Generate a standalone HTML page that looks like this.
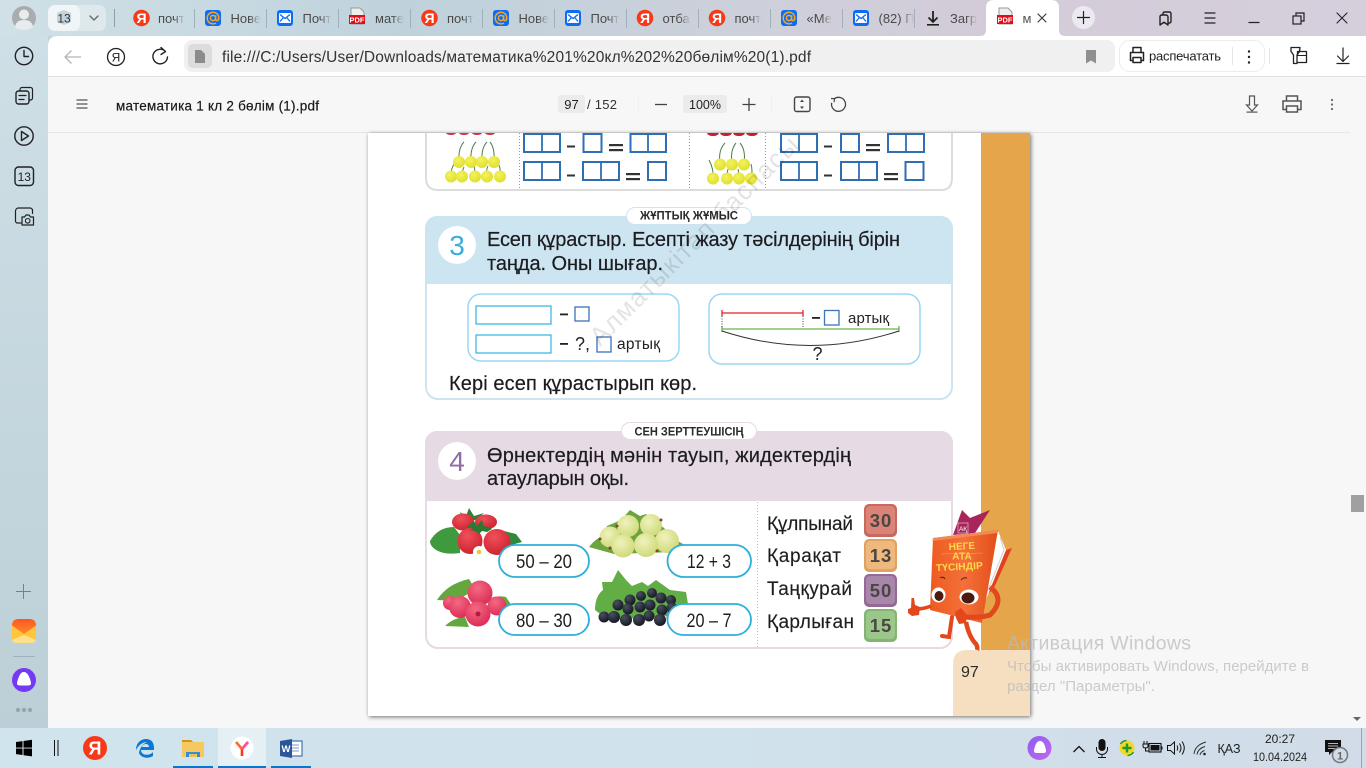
<!DOCTYPE html>
<html lang="ru">
<head>
<meta charset="utf-8">
<title>математика 1 кл 2 бөлім (1).pdf</title>
<style>
html,body{margin:0;padding:0;width:1366px;height:768px;overflow:hidden;background:#f7f7f7}
svg{display:block;position:absolute;left:0;top:0}
text{font-family:"Liberation Sans","DejaVu Sans",sans-serif}
.ic{fill:none;stroke:#222;stroke-width:1.4;stroke-linecap:round;stroke-linejoin:round}
.sq{fill:#fff;stroke:#2f6db5;stroke-width:2}
.tb{fill:#1c1c20;font-size:20px;stroke:#1c1c20;stroke-width:.2}
.w{fill:#1e1e22;font-size:19px;stroke:#1e1e22;stroke-width:.15}
.p{fill:#fff;stroke:#2eaedb;stroke-width:1.8}
.pt{fill:#1e1e22;font-size:19px;text-anchor:middle}
.tile{font-size:18.5px;font-weight:bold;fill:#4a4644;text-anchor:middle;letter-spacing:1px}
.tab{font-size:13px;fill:url(#fade)}
.act{fill:#bbb;fill-opacity:.75}
</style>
</head>
<body>
<svg width="1366" height="768" viewBox="0 0 1366 768" xmlns="http://www.w3.org/2000/svg">
<defs>
<linearGradient id="top" x1="0" x2="1" y1="0" y2="0">
<stop offset="0" stop-color="#d0e0e6"/><stop offset=".3" stop-color="#bfd2dc"/><stop offset=".55" stop-color="#cdd0da"/><stop offset=".75" stop-color="#d4cbd8"/><stop offset="1" stop-color="#d5cfdc"/>
</linearGradient>
<linearGradient id="side" x1="0" x2="0" y1="0" y2="1">
<stop offset="0" stop-color="#cfdfe6"/><stop offset="1" stop-color="#bccfd7"/>
</linearGradient>
<linearGradient id="task" x1="0" x2="1" y1="0" y2="0">
<stop offset="0" stop-color="#cfe4ed"/><stop offset=".5" stop-color="#d0e2ec"/><stop offset="1" stop-color="#d1dce8"/>
</linearGradient>
<linearGradient id="fade" x1="0" x2="1" y1="0" y2="0">
<stop offset="0" stop-color="#4a4a4a"/><stop offset=".6" stop-color="#4a4a4a"/><stop offset="1" stop-color="#4a4a4a" stop-opacity="0"/>
</linearGradient>
<linearGradient id="mail" x1="0" x2="0" y1="0" y2="1">
<stop offset="0" stop-color="#ff5522"/><stop offset="1" stop-color="#ff8a2a"/>
</linearGradient>
<linearGradient id="alice2" x1="0" x2="1" y1="0" y2="1">
<stop offset="0" stop-color="#8d5cf0"/><stop offset="1" stop-color="#c368ee"/>
</linearGradient>
<linearGradient id="cover" x1="0" x2="1" y1="0" y2="0">
<stop offset="0" stop-color="#ee5a20"/><stop offset=".5" stop-color="#f4703a"/><stop offset="1" stop-color="#e34e18"/>
</linearGradient>
<radialGradient id="red" cx=".4" cy=".3" r=".8"><stop offset="0" stop-color="#f0505a"/><stop offset="1" stop-color="#c81e2a"/></radialGradient>
<radialGradient id="rasp" cx=".4" cy=".3" r=".8"><stop offset="0" stop-color="#f36a84"/><stop offset="1" stop-color="#d92550"/></radialGradient>
<radialGradient id="goose" cx=".4" cy=".35" r=".8"><stop offset="0" stop-color="#f0f2bd"/><stop offset="1" stop-color="#c8d56c"/></radialGradient>
<radialGradient id="cur" cx=".35" cy=".3" r=".8"><stop offset="0" stop-color="#4a5060"/><stop offset="1" stop-color="#10121c"/></radialGradient>
<radialGradient id="yel" cx=".4" cy=".35" r=".8"><stop offset="0" stop-color="#f4f25e"/><stop offset="1" stop-color="#dbdc22"/></radialGradient>
<filter id="shadow" x="-5%" y="-5%" width="110%" height="110%"><feDropShadow dx="1" dy="1" stdDeviation="2" flood-color="#000" flood-opacity=".55"/></filter>
<g id="atI"><rect x="-8" y="-8" width="16" height="16" rx="3" fill="#0b6cf5"/><circle r="2.6" fill="none" stroke="#f9a825" stroke-width="1.5"/><path d="M2.6-2.6V1q0 1.8 1.6 1.5T5.8 0A5.8 5.8 0 1 0 3 5" fill="none" stroke="#f9a825" stroke-width="1.5"/></g>
<g id="mlI"><rect x="-8" y="-8" width="16" height="16" rx="3" fill="#0b6cf5"/><rect x="-6" y="-5" width="12" height="10" rx="1" fill="#fff"/><path d="M-5-3.5 0 .5 5-3.5M-5 3.5-1.8-.4M5 3.5 1.8-.4" fill="none" stroke="#0b6cf5" stroke-width="1.3"/></g>
</defs>

<!-- browser frame -->
<rect width="1366" height="36" fill="url(#top)"/>
<rect y="36" width="48" height="692" fill="url(#side)"/>
<rect x="48" y="36" width="1318" height="40" fill="#fff"/>
<path d="M48 36h10q-10 0-10 10z" fill="#c3d4dc"/>
<rect x="48" y="76" width="1318" height="1" fill="#dfdfdf"/>
<rect x="48" y="77" width="1318" height="651" fill="#f7f7f7"/>
<rect x="48" y="132" width="1302" height="1" fill="#e6e6e6"/>

<!-- avatar & tab group -->
<circle cx="24" cy="18" r="12" fill="#a9adaf"/>
<circle cx="24" cy="14.5" r="5" fill="#e9ecee"/>
<path d="M15 27q1-7 9-7t9 7q-4 3-9 3t-9-3z" fill="#e9ecee"/>
<rect x="48" y="5" width="58" height="26" rx="7" fill="#fff" fill-opacity=".35"/>
<rect x="48" y="5" width="32" height="26" rx="7" fill="#fff" fill-opacity=".55"/>
<path d="M64 10l7 3v9l-7 3-7-3v-9z" fill="#c5d3da"/>
<text x="64" y="22.5" font-size="12" text-anchor="middle" fill="#333">13</text>
<path d="M90 16l4 4 4-4" class="ic" style="stroke:#6a6a6a"/>
<rect x="114" y="9" width="1" height="18" fill="#8e9da6"/>

<!-- tabs -->
<g fill="#9fb0ba">
<rect x="194" y="9" width="1" height="19"/><rect x="266" y="9" width="1" height="19"/><rect x="338" y="9" width="1" height="19"/><rect x="410" y="9" width="1" height="19"/><rect x="482" y="9" width="1" height="19"/><rect x="554" y="9" width="1" height="19"/><rect x="626" y="9" width="1" height="19"/><rect x="698" y="9" width="1" height="19"/><rect x="770" y="9" width="1" height="19"/><rect x="842" y="9" width="1" height="19"/><rect x="914" y="9" width="1" height="19"/>
</g>
<circle cx="141.500" cy="18" r="8.300" fill="#f7391a"/><text x="141.500" y="23" font-size="14" font-weight="bold" fill="#fff" text-anchor="middle">Я</text>
<use href="#atI" x="213" y="18"/>
<use href="#mlI" x="285" y="18"/>
<g>
<path d="M351 8h9l4 4v12h-13z" fill="#eee" stroke="#999" stroke-width="1"/><rect x="349" y="15" width="16" height="9" fill="#e30b17"/><text x="357" y="22.500" font-size="7.500" font-weight="bold" fill="#fff" text-anchor="middle">PDF</text>
</g>
<circle cx="429.500" cy="18" r="8.300" fill="#f7391a"/><text x="429.500" y="23" font-size="14" font-weight="bold" fill="#fff" text-anchor="middle">Я</text>
<use href="#atI" x="501" y="18"/>
<use href="#mlI" x="573" y="18"/>
<circle cx="645" cy="18" r="8.300" fill="#f7391a"/><text x="645" y="23" font-size="14" font-weight="bold" fill="#fff" text-anchor="middle">Я</text>
<circle cx="717" cy="18" r="8.300" fill="#f7391a"/><text x="717" y="23" font-size="14" font-weight="bold" fill="#fff" text-anchor="middle">Я</text>
<use href="#atI" x="789" y="18"/>
<use href="#mlI" x="861" y="18"/>
<path d="M933 11v11M928.500 17.500l4.500 4.500 4.500-4.500" fill="none" stroke="#222" stroke-width="1.800"/><rect x="927" y="24" width="12" height="1.600" fill="#222"/>
<text class="tab" x="158" y="23">почт</text>
<text class="tab" x="230.500" y="23">Нове</text>
<text class="tab" x="302.500" y="23">Почт</text>
<text class="tab" x="375" y="23">мате</text>
<text class="tab" x="447" y="23">почт</text>
<text class="tab" x="518.500" y="23">Нове</text>
<text class="tab" x="590.500" y="23">Почт</text>
<text class="tab" x="662.500" y="23">отба</text>
<text class="tab" x="734.500" y="23">почт</text>
<text class="tab" x="806.500" y="23">«Ме</text>
<text class="tab" x="878.500" y="23">(82) П</text>
<text class="tab" x="950" y="23">Загр</text>

<!-- active tab -->
<path d="M980 36q6 0 6-6V8q0-8 8-8h57q8 0 8 8v22q0 6 6 6z" fill="#fff"/>
<path d="M999 8h9l4 4v12h-13z" fill="#eee" stroke="#999" stroke-width="1"/><rect x="997" y="15" width="16" height="9" fill="#e30b17"/><text x="1005" y="22.500" font-size="7.500" font-weight="bold" fill="#fff" text-anchor="middle">PDF</text>
<text x="1022.500" y="23" font-size="13" fill="#555">м</text>
<path d="M1038 14l8 8M1046 14l-8 8" class="ic" style="stroke:#333;stroke-width:1.100"/>

<!-- new tab & window controls -->
<circle cx="1083.500" cy="17.500" r="11.500" fill="#eceaf0"/>
<path d="M1083.500 11.500v12M1077.500 17.500h12" class="ic" style="stroke-width:1.200"/>
<path d="M1163 15h-1.500a1.500 1.500 0 0 0-1.500 1.500V25l4-2.800 4 2.800v-2h1.500a1.500 1.500 0 0 0 1.500-1.500V13.500a1.500 1.500 0 0 0-1.500-1.500h-5a1.500 1.500 0 0 0-1.500 1.500V15h3a2 2 0 0 1 2 2v6" class="ic"/>
<path d="M1205 13h10M1205 18h10M1205 23h10" class="ic" style="stroke-width:1.200"/>
<path d="M1249 22.500h10" class="ic" style="stroke-width:1.200"/>
<rect x="1293" y="16" width="8" height="8" fill="none" stroke="#222" stroke-width="1.200"/><path d="M1296 16v-3h8v8h-3" fill="none" stroke="#222" stroke-width="1.200"/>
<path d="M1337 13l10 10M1347 13l-10 10" class="ic" style="stroke-width:1.100"/>

<!-- toolbar -->
<path d="M81 57H65M71.500 50.500 65 57l6.500 6.500" fill="none" stroke="#b5b5b5" stroke-width="1.300"/>
<circle cx="116" cy="57" r="8.500" fill="none" stroke="#222" stroke-width="1.300"/><text x="116" y="61.500" font-size="12" text-anchor="middle" fill="#222">Я</text>
<path d="M165.500 51.500A7.300 7.300 0 1 0 167.500 57M161 47.500l4.500 4-4.500 3" class="ic" style="stroke-width:1.400"/>
<rect x="184" y="40" width="931" height="32" rx="8" fill="#f0f0f0"/>
<rect x="188" y="44" width="24" height="24" rx="5" fill="#dcdcdc"/>
<path d="M195 50h6l4 4v9h-10z" fill="#8b8b8b"/>
<text x="222" y="62" font-size="15.500" fill="#333" textLength="589">file:///C:/Users/User/Downloads/математика%201%20кл%202%20бөлім%20(1).pdf</text>
<path d="M1086 50h10v13.500l-5-3-5 3z" fill="#8f8f8f"/>
<rect x="1119.500" y="40.500" width="145" height="31" rx="10" fill="#fff" stroke="#ececec"/>
<path d="M1133 52v-4.500h8V52M1133 60.500h-2.500V52.500h13v8H1141M1133 57.500h8v5h-8z" class="ic" style="stroke-width:1.500"/>
<text x="1149" y="60.500" font-size="13" fill="#222" textLength="72">распечатать</text>
<rect x="1232" y="47" width="1" height="18" fill="#e6e6e6"/>
<circle cx="1249" cy="51.500" r="1.200" fill="#222"/><circle cx="1249" cy="57" r="1.200" fill="#222"/><circle cx="1249" cy="62.500" r="1.200" fill="#222"/>
<rect x="1269" y="48" width="1" height="16" fill="#e6e6e6"/>
<path d="M1291 47.500h9l-.5 4-2.500 3.500v8.500h-3.500V55l-2.500-3.500z" class="ic" style="stroke-width:1.300"/>
<path d="M1297.500 55v-3.500h9v11h-9" class="ic" style="stroke-width:1.300"/><path d="M1297.500 55.500h9" class="ic" style="stroke-width:1.100"/>
<path d="M1343 48v13M1337.500 56l5.500 5.500 5.500-5.500" class="ic" style="stroke-width:1.200"/><path d="M1337 63.500h12" class="ic" style="stroke-width:1.200"/>

<!-- pdf toolbar -->
<path d="M76.500 100h11M76.500 104h11M76.500 108h11" fill="none" stroke="#555" stroke-width="1.300"/>
<text x="116" y="110.500" font-size="13.500" fill="#1a1a1a" stroke="#1a1a1a" stroke-width=".2" textLength="203">математика 1 кл 2 бөлім (1).pdf</text>
<rect x="558" y="95" width="27" height="18" rx="3" fill="#ebebeb"/>
<text x="571.500" y="109" font-size="13" fill="#222" text-anchor="middle">97</text>
<text x="587" y="109" font-size="13" fill="#333" textLength="30">/ 152</text>
<rect x="638" y="96" width="1" height="17" fill="#f0f0f0"/>
<path d="M655 104.500h12" stroke="#444" stroke-width="1.300"/>
<rect x="683" y="95" width="44" height="18" rx="3" fill="#ebebeb"/>
<text x="705" y="109" font-size="12.500" fill="#222" text-anchor="middle">100%</text>
<path d="M749 98v13M742.500 104.500h13" stroke="#444" stroke-width="1.300"/>
<rect x="771" y="96" width="1" height="17" fill="#f0f0f0"/>
<rect x="794.500" y="97" width="15.500" height="14.500" rx="2" fill="none" stroke="#444" stroke-width="1.400"/>
<path d="M802 99.500l2 2.500h-4zM802 109l2-2.500h-4z" fill="#444"/>
<path d="M834 99a7 7 0 1 1-2.300 3.800" fill="none" stroke="#444" stroke-width="1.300"/><path d="M831 98.500l3.500.2-.4 3.500" fill="none" stroke="#444" stroke-width="1.200"/>
<path d="M1249.500 96h5v9h3l-5.500 6-5.500-6h3z" fill="none" stroke="#555" stroke-width="1.200"/><rect x="1246.500" y="111.500" width="11" height="1.200" fill="#555"/>
<path d="M1286.500 101v-5h11v5M1286.500 109.500h-3.500V101h18v8.500h-3.500M1286.500 106h11v6h-11z" fill="none" stroke="#555" stroke-width="1.500"/>
<circle cx="1332" cy="100" r="1.100" fill="#666"/><circle cx="1332" cy="104.500" r="1.100" fill="#666"/><circle cx="1332" cy="109" r="1.100" fill="#666"/>

<!-- sidebar icons -->
<circle cx="24" cy="56" r="8.700" class="ic"/><path d="M24 50.500V56.500h4.500" class="ic"/>
<rect x="16" y="91" width="13" height="13" rx="2.500" class="ic"/><path d="M19 95.500h7M19 99.500h5M20 91v-1.500a2 2 0 0 1 2-2h8.500a2 2 0 0 1 2 2V98a2 2 0 0 1-2 2H29" class="ic" style="stroke-width:1.200"/>
<circle cx="24" cy="136" r="9.200" class="ic"/><path d="M21.500 131.500v9l7-4.500z" class="ic"/>
<rect x="15" y="167" width="18.500" height="18.500" rx="3.500" class="ic"/><text x="24.300" y="181" font-size="12" text-anchor="middle" fill="#222">13</text>
<path d="M21 223h-3.500a2 2 0 0 1-2-2v-10a3 3 0 0 1 3-3H30a2.500 2.500 0 0 1 2.500 2.500v3" class="ic" style="stroke-width:1.200"/>
<path d="M22 225h11.500v-8H30.500l-1.500-2h-3l-1.500 2H22z" class="ic" style="stroke-width:1.200"/><circle cx="27.700" cy="220.800" r="2.300" class="ic" style="stroke-width:1.100"/>
<path d="M23.500 584v15M16 591.500h15" stroke="#74828a" stroke-width="1"/>
<rect x="12" y="619" width="24" height="24" rx="6" fill="#ffc53d"/>
<path d="M12 625a6 6 0 0 1 6-6h12a6 6 0 0 1 6 6v.5L24 634 12 625.500z" fill="url(#mail)"/>
<path d="M12 640l12-5 12 5a5 5 0 0 1-5 3H17a5 5 0 0 1-5-3zM12 636v4M36 636v4" fill="#ffe08a"/>
<rect x="13" y="656" width="22" height="1" fill="#9fb1ba"/>
<circle cx="24" cy="680" r="12" fill="#7339f3"/><path d="M24 672q3 0 5 4.500t2 7q0 2-3 2h-8q-3 0-3-2t2-7 5-4.500z" fill="#fff"/>
<circle cx="18" cy="710" r="2.200" fill="#96a5ac"/><circle cx="24" cy="710" r="2.200" fill="#96a5ac"/><circle cx="30" cy="710" r="2.200" fill="#96a5ac"/>

<!-- scrollbar -->
<rect x="1351" y="495" width="13" height="17" fill="#a0a0a0"/>
<path d="M1353 717h8l-4 4z" fill="#666"/>

<!-- PAGE -->
<rect x="368" y="133" width="662" height="583" fill="#fff" filter="url(#shadow)"/>
<rect x="981" y="133" width="49" height="517" fill="#e5a54a"/>
<path d="M953 716v-52q0-14 14-14h63v66z" fill="#f6dfc0"/>
<text x="961" y="677" font-size="16" fill="#2b2b2b">97</text>

<!-- top card -->
<path d="M426 133v45q0 12 12 12h503q11 0 11-12v-45" fill="#fff" stroke="#dcdcdc" stroke-width="2"/>
<path d="M519.500 133v57M689.500 133v57M765.500 133v57" stroke="#999" stroke-width="1" stroke-dasharray="1 2"/>
<!-- cherries left -->
<g fill="#d8313a">
<path d="M446 133h10q-1 2-5 2t-5-2zM459 133h10q-1 2-5 2t-5-2zM472 133h10q-1 2-5 2t-5-2zM485 133h10q-1 2-5 2t-5-2z"/>
</g>
<g fill="none" stroke="#4d7c52" stroke-width="1">
<path d="M459 162q-1-14 5-20M471 162q-1-14 5-20M482 162q-1-14 5-20M494 162q1-14-4-20M451 177q-1-8 5-16M462 177q0-6 2-10M475 177q0-8-1-11M487 177q-1-8 1-11M500 177q1-7-1-12"/>
</g>
<g fill="url(#yel)">
<circle cx="459" cy="162" r="6"/><circle cx="471" cy="162" r="6"/><circle cx="482" cy="162" r="6"/><circle cx="494" cy="162" r="6"/>
<circle cx="451" cy="176.500" r="6"/><circle cx="462" cy="176.500" r="6"/><circle cx="475" cy="176.500" r="6"/><circle cx="487" cy="176.500" r="6"/><circle cx="500" cy="176.500" r="6"/>
</g>
<!-- cherries right -->
<g fill="#c71d2c">
<path d="M707 133h12q-1 3-6 3t-6-3zM720 133h12q-1 3-6 3t-6-3zM733 133h12q-1 3-6 3t-6-3zM746 133h12q-1 3-6 3t-6-3z"/>
</g>
<g fill="none" stroke="#4d7c52" stroke-width="1">
<path d="M720 164q-2-14 5-21M732 164q-2-14 4-21M744 164q2-14-4-21M713 179q1-10-4-19M727 179q0-6 1-10M739 179q0-6-1-10M751 179q2-8 0-15"/>
</g>
<g fill="url(#yel)">
<circle cx="720" cy="164.500" r="6"/><circle cx="732" cy="164.500" r="6"/><circle cx="744" cy="164.500" r="6"/>
<circle cx="713" cy="178.500" r="6"/><circle cx="727" cy="178.500" r="6"/><circle cx="739" cy="178.500" r="6"/><circle cx="751" cy="178.500" r="6"/>
</g>
<!-- squares -->
<g>
<rect class="sq" x="524" y="134" width="36" height="18"/><path d="M542 134v18" stroke="#2f6db5" stroke-width="1.800"/>
<rect class="sq" x="583.500" y="134" width="18" height="18"/>
<rect class="sq" x="630.500" y="134" width="35.500" height="18"/><path d="M648 134v18" stroke="#2f6db5" stroke-width="1.800"/>
<rect class="sq" x="524" y="162" width="36" height="18"/><path d="M542 162v18" stroke="#2f6db5" stroke-width="1.800"/>
<rect class="sq" x="583" y="162" width="36" height="18"/><path d="M601 162v18" stroke="#2f6db5" stroke-width="1.800"/>
<rect class="sq" x="648" y="162" width="18" height="18"/>
<rect class="sq" x="781" y="134" width="36" height="18"/><path d="M799 134v18" stroke="#2f6db5" stroke-width="1.800"/>
<rect class="sq" x="841" y="134" width="18" height="18"/>
<rect class="sq" x="888" y="134" width="36" height="18"/><path d="M906 134v18" stroke="#2f6db5" stroke-width="1.800"/>
<rect class="sq" x="781" y="162" width="36" height="18"/><path d="M799 162v18" stroke="#2f6db5" stroke-width="1.800"/>
<rect class="sq" x="841" y="162" width="36" height="18"/><path d="M859 162v18" stroke="#2f6db5" stroke-width="1.800"/>
<rect class="sq" x="905.500" y="162" width="18" height="18"/>
</g>
<g fill="#333">
<rect x="567" y="145.500" width="8" height="2"/><rect x="567" y="174.500" width="8" height="2"/>
<rect x="824" y="145.500" width="8" height="2"/><rect x="824" y="174.500" width="8" height="2"/>
<rect x="609" y="144" width="14" height="2.200"/><rect x="609" y="149" width="14" height="2.200"/>
<rect x="626" y="173" width="14" height="2.200"/><rect x="626" y="178" width="14" height="2.200"/>
<rect x="866" y="144" width="14" height="2.200"/><rect x="866" y="149" width="14" height="2.200"/>
<rect x="884" y="173" width="14" height="2.200"/><rect x="884" y="178" width="14" height="2.200"/>
</g>

<!-- section 3 -->
<rect x="426" y="217" width="526" height="182" rx="12" fill="#fff" stroke="#cde5f1" stroke-width="2"/>
<path d="M425 284v-56a12 12 0 0 1 12-12h504a12 12 0 0 1 12 12v56z" fill="#cde5f1"/>
<rect x="626.500" y="207.500" width="125" height="17" rx="8.500" fill="#fff" stroke="#cde5f1"/>
<text x="689" y="219.500" font-size="11.500" font-weight="bold" fill="#2a2a2a" text-anchor="middle" textLength="98" lengthAdjust="spacingAndGlyphs">ЖҰПТЫҚ ЖҰМЫС</text>
<circle cx="457" cy="245" r="19" fill="#fff"/>
<text x="457" y="255" font-size="28" fill="#3aaedb" text-anchor="middle">3</text>
<text class="tb" x="487" y="246" textLength="413">Есеп құрастыр. Есепті жазу тәсілдерінің бірін</text>
<text class="tb" x="487" y="270" textLength="176">таңда. Оны шығар.</text>

<rect x="468" y="294" width="211" height="67" rx="13" fill="#fff" stroke="#9bd7f3" stroke-width="1.500"/>
<rect x="476" y="306" width="75" height="18" fill="#fff" stroke="#2db4e2" stroke-width="1.200"/>
<rect x="476" y="335" width="75" height="18" fill="#fff" stroke="#2db4e2" stroke-width="1.200"/>
<rect x="560" y="313.500" width="8" height="1.800" fill="#222"/>
<rect x="575" y="307" width="14" height="14" fill="#fff" stroke="#3b74b8" stroke-width="1.300"/>
<rect x="560" y="343" width="8" height="1.800" fill="#222"/>
<text x="575" y="350" font-size="18" fill="#222">?,</text>
<rect x="597" y="337" width="14" height="15" fill="#fff" stroke="#3b74b8" stroke-width="1.300"/>
<text x="617" y="349" font-size="15.500" fill="#222" textLength="43">артық</text>

<rect x="709" y="294" width="211" height="70" rx="13" fill="#fff" stroke="#9bd7f3" stroke-width="1.500"/>
<path d="M722 313h81M722 310v6M803 310v6" stroke="#e52127" stroke-width="1.300" fill="none"/>
<path d="M722 329h177M722 326v6M899 326v6" stroke="#69b04f" stroke-width="1.300" fill="none"/>
<path d="M722 316v12M803 316v12" stroke="#444" stroke-width="1" stroke-dasharray="1 1.500"/>
<path d="M722 331Q810 360 899 331" fill="none" stroke="#333" stroke-width="1"/>
<rect x="812" y="317" width="8" height="1.800" fill="#222"/>
<rect x="824.500" y="310.500" width="14.500" height="14.500" fill="#fff" stroke="#3b74b8" stroke-width="1.300"/>
<text x="848" y="323" font-size="15" fill="#222" textLength="41">артық</text>
<text x="817.500" y="360" font-size="18" fill="#222" text-anchor="middle">?</text>
<text class="tb" x="449" y="390" textLength="248">Кері есеп құрастырып көр.</text>

<!-- watermark -->
<text x="600" y="347" font-size="26" fill="#000" fill-opacity=".11" transform="rotate(-45 600 347)" textLength="283">Алматыкітап баспасы</text>

<!-- section 4 -->
<rect x="426" y="432" width="526" height="216" rx="12" fill="#fff" stroke="#e6dae5" stroke-width="2"/>
<path d="M425 501v-58a12 12 0 0 1 12-12h504a12 12 0 0 1 12 12v58z" fill="#e6dae5"/>
<rect x="621.500" y="422.500" width="135" height="17" rx="8.500" fill="#fff" stroke="#e6dae5"/>
<text x="689" y="435.500" font-size="12" font-weight="bold" fill="#2a2a2a" text-anchor="middle" textLength="109" lengthAdjust="spacingAndGlyphs">СЕН ЗЕРТТЕУШІСІҢ</text>
<circle cx="457" cy="461" r="19" fill="#fff"/>
<text x="457" y="471" font-size="28" fill="#8e6ea8" text-anchor="middle">4</text>
<text class="tb" x="487" y="462" textLength="364">Өрнектердің мәнін тауып, жидектердің</text>
<text class="tb" x="487" y="485" textLength="142">атауларын оқы.</text>
<path d="M757.500 502v146" stroke="#bbb" stroke-width="1" stroke-dasharray="1 2"/>

<!-- strawberries -->
<g>
<path d="M430 541q8-14 24-14l6 8 0 18q-14 2-22-2-8-4-8-10z" fill="#3f9a3e"/>
<path d="M500 530l16 4 6 8-14 4z" fill="#2f8a3a"/>
<path d="M460 512l6 4 3-8 5 8 10-3-8 7-12 2z" fill="#2f8136"/>
<ellipse cx="463" cy="522" rx="11" ry="8.500" fill="url(#red)"/>
<ellipse cx="486" cy="522" rx="11" ry="7.500" fill="url(#red)"/>
<path d="M466 528l8-7 3 5 5-6 2 7 8 1-8 3h-10z" fill="#2b7a32"/>
<ellipse cx="470" cy="541" rx="12.500" ry="13" fill="url(#red)"/>
<ellipse cx="497" cy="542" rx="13.500" ry="13" fill="url(#red)"/>
<path d="M470 530l7-4 3 4 5-4 7 3-5 3-5-1-3 3-4-3z" fill="#2b7a32"/>
<circle cx="479" cy="552" r="6" fill="#fff"/><circle cx="479" cy="552" r="2.300" fill="#e0cc3a"/>
</g>
<!-- gooseberries -->
<g>
<path d="M589 547q6-8 14-11l4-10 14-6 9-10 10 6 6-2 18 14 12 12 14 8-16 4-60 2z" fill="#6da43f"/>
<circle cx="610" cy="537" r="10.500" fill="url(#goose)"/>
<circle cx="628" cy="526" r="11" fill="url(#goose)"/><circle cx="651" cy="525" r="11" fill="url(#goose)"/>
<circle cx="667" cy="541" r="12" fill="url(#goose)"/>
<circle cx="623" cy="546" r="11.500" fill="url(#goose)"/><circle cx="646" cy="545" r="12" fill="url(#goose)"/>
<g fill="#7e4a2c"><circle cx="617" cy="526" r="1.500"/><circle cx="661" cy="520" r="1.500"/><circle cx="600" cy="539" r="1.500"/><circle cx="610" cy="548" r="1.500"/><circle cx="657" cy="551" r="1.500"/></g>
</g>
<!-- raspberries -->
<g>
<path d="M437 600q10-16 32-21l6 10-18 12z" fill="#63a83f"/>
<path d="M445 626q8-8 20-9l4 10z" fill="#63a83f"/>
<path d="M490 598q8-3 16-1l8 12-20 2z" fill="#63a83f"/>
<circle cx="450" cy="603" r="7" fill="url(#rasp)"/>
<circle cx="460" cy="607" r="11" fill="url(#rasp)"/>
<circle cx="497" cy="606" r="9.500" fill="url(#rasp)"/>
<circle cx="480" cy="593" r="12.500" fill="url(#rasp)"/>
<circle cx="478" cy="614" r="12.500" fill="url(#rasp)"/>
<circle cx="478" cy="614" r="2.500" fill="#b81a3f"/>
</g>
<!-- currants -->
<g>
<path d="M595 610q0-14 8-20l-1-8 10 0 6-12 8 10 6 6 10-4 6 4 8-6 14 10 16 2 2 12-20 12-60 4z" fill="#62ad45"/>
<g fill="url(#cur)">
<circle cx="641" cy="596" r="5"/><circle cx="652" cy="593" r="5"/><circle cx="630" cy="600" r="5.500"/><circle cx="661" cy="598" r="5.500"/><circle cx="671" cy="600" r="5"/>
<circle cx="618" cy="605" r="5.500"/><circle cx="628" cy="609" r="5.500"/><circle cx="640" cy="607" r="5.500"/><circle cx="650" cy="605" r="5.500"/><circle cx="662" cy="610" r="5.500"/><circle cx="672" cy="608" r="5.500"/>
<circle cx="604" cy="617" r="5.500"/><circle cx="614" cy="617" r="6"/><circle cx="626" cy="620" r="6"/><circle cx="639" cy="620" r="6"/><circle cx="649" cy="616" r="5.500"/><circle cx="660" cy="620" r="6"/><circle cx="672" cy="618" r="5.500"/>
</g>
</g>
<!-- expression pills -->
<rect class="p" x="499" y="545" width="90" height="32" rx="16"/><text class="pt" x="544" y="568" textLength="56" lengthAdjust="spacingAndGlyphs">50 – 20</text>
<rect class="p" x="667.500" y="545" width="83.500" height="32" rx="16"/><text class="pt" x="709" y="568" textLength="44" lengthAdjust="spacingAndGlyphs">12 + 3</text>
<rect class="p" x="499" y="604" width="90" height="31" rx="16"/><text class="pt" x="544" y="627" textLength="56" lengthAdjust="spacingAndGlyphs">80 – 30</text>
<rect class="p" x="667.500" y="604" width="83.500" height="31" rx="16"/><text class="pt" x="709" y="627" textLength="45" lengthAdjust="spacingAndGlyphs">20 – 7</text>
<!-- words -->
<text class="w" x="767" y="530" textLength="86">Құлпынай</text>
<text class="w" x="767" y="562" textLength="74">Қарақат</text>
<text class="w" x="767" y="595" textLength="85">Таңқурай</text>
<text class="w" x="767" y="628" textLength="87">Қарлыған</text>
<!-- tiles -->
<g>
<rect x="864" y="504" width="33" height="33" rx="5" fill="#c9685c"/><rect x="866" y="506" width="29" height="28" rx="4" fill="#da8376"/>
<text class="tile" x="881" y="527">30</text>
<rect x="864" y="539" width="33" height="33" rx="5" fill="#e0a263"/><rect x="866" y="541" width="29" height="28" rx="4" fill="#efb97d"/>
<text class="tile" x="881" y="562">13</text>
<rect x="864" y="574" width="33" height="33" rx="5" fill="#946a94"/><rect x="866" y="576" width="29" height="28" rx="4" fill="#a987aa"/>
<text class="tile" x="881" y="597">50</text>
<rect x="864" y="609" width="33" height="33" rx="5" fill="#85b374"/><rect x="866" y="611" width="29" height="28" rx="4" fill="#9cc78b"/>
<text class="tile" x="881" y="632">15</text>
</g>
<!-- mascot -->
<g>
<path d="M953 535l9-25 8 8 20-8-15 23z" fill="#a8245a"/>
<rect x="958" y="523" width="10" height="10" fill="none" stroke="#fff" stroke-opacity=".7" stroke-width=".7"/>
<text x="963" y="531" font-size="6.500" fill="#fff" text-anchor="middle">АҚ</text>
<path d="M1006 550l6-2-19 42-6 4z" fill="#e2401f"/>
<path d="M998 531l8 19-23 57-1 16-6-4z" fill="#fff"/>
<path d="M1000 537l4 13-20 50" fill="none" stroke="#ccc" stroke-width="1"/>
<path d="M952 617l-3 20-7-1" fill="none" stroke="#e2481c" stroke-width="4" stroke-linecap="round"/>
<path d="M966 622q3 15 10 22 2 3 1 6" fill="none" stroke="#e2481c" stroke-width="4.500"/>
<path d="M933 538l65-8-16 93-52-13z" fill="url(#cover)"/>
<path d="M933 538l65-8-.5 3-65 8z" fill="#f28a55"/>
<text x="962" y="549.500" font-size="10" font-weight="bold" fill="#ffd84a" text-anchor="middle" transform="rotate(-3 962 549)">НЕГЕ</text>
<path d="M941 554l42-1" stroke="#f8a070" stroke-width=".6"/>
<text x="962" y="559.500" font-size="10" font-weight="bold" fill="#ffd84a" text-anchor="middle">АТА</text>
<text x="959.500" y="570" font-size="10" font-weight="bold" fill="#ffd84a" text-anchor="middle" textLength="47" lengthAdjust="spacingAndGlyphs" transform="rotate(-3 959 570)">ТҮСІНДІР</text>
<path d="M940 578q3-2 5 1M961 580q3-3 6-2" fill="none" stroke="#5a2010" stroke-width="1"/>
<ellipse cx="938.500" cy="595" rx="7" ry="7.500" fill="#fff"/><ellipse cx="939" cy="596" rx="4.500" ry="5" fill="#4a1c10"/>
<ellipse cx="969" cy="597" rx="9.500" ry="7.500" fill="#fff"/><ellipse cx="968" cy="598" rx="6.500" ry="5.500" fill="#4a1c10"/>
<path d="M931 606q-7 3-15 3" fill="none" stroke="#e2481c" stroke-width="3.500"/>
<path d="M908 609l3-1 .5-10 2.500 0 1 7 5 2-1 8-7 1-4-3z" fill="#e2481c"/>
<path d="M990 587q8 6 8 13t-8 15q-9 3-27 2" fill="none" stroke="#e2481c" stroke-width="5"/>
<path d="M955 612l6-4 6 7-1 8-7 1-3-6z" fill="#e2481c"/>
</g>

<!-- activation watermark -->
<text class="act" x="1007" y="649.500" font-size="19.500" textLength="184">Активация Windows</text>
<text class="act" x="1007" y="671" font-size="15" textLength="302">Чтобы активировать Windows, перейдите в</text>
<text class="act" x="1007" y="691" font-size="15" textLength="148">раздел "Параметры".</text>

<!-- taskbar -->
<rect y="728" width="1366" height="40" fill="url(#task)"/>
<path d="M16 742l6.500-.9v6.500H16zM23.500 741l8.500-1.300v7.900h-8.500zM16 748.500h6.500v6.500l-6.500-.9zM23.500 748.500H32v7.900l-8.500-1.200z" fill="#000"/>
<path d="M54.500 740v16M58 740v16" stroke="#111" stroke-width="1"/>
<circle cx="95" cy="748" r="12" fill="#f7391a"/><text x="95" y="754.500" font-size="18" font-weight="bold" fill="#fff" text-anchor="middle">Я</text>
<path d="M136 750c0-6 4-11 10-11 5 0 8 3 8 9v2h-13c0 6 9 6 12 2v4c-5 3-12 2-14-3 0 0 1-8 8-11-5 0-9 4-11 8zm6-3h7c0-4-6-4-7 0z" fill="#0a78d4"/>
<path d="M182 740h9l2 2h11v15h-22z" fill="#f5c95f"/><path d="M182 740h9l2 2h-11z" fill="#d6950f"/>
<path d="M186 752h14v5h-3v-3h-8v3h-3z" fill="#2f8fd4"/><rect x="190" y="754" width="6" height="3" fill="#f0be50"/>
<rect x="173" y="766" width="40" height="2" fill="#0078d4"/>
<rect x="218" y="728" width="48" height="40" fill="#fff" fill-opacity=".45"/>
<rect x="218" y="766" width="48" height="2" fill="#0078d4"/>
<circle cx="242" cy="748" r="11.500" fill="#fff"/>
<path d="M236 742l6 7 6-7" fill="none" stroke="#ff6a2a" stroke-width="2.600"/><path d="M242 749v7" stroke="#f7391a" stroke-width="2.600"/>
<path d="M242 749l6-7" stroke="#ff4fa0" stroke-width="2.600"/>
<rect x="271" y="766" width="40" height="2" fill="#0078d4"/>
<rect x="287" y="741" width="15" height="15" fill="#fff" stroke="#2b579a"/>
<path d="M290 745h9M290 748h9M290 751h9" stroke="#7a9ac8"/>
<path d="M280 741l12-2v19l-12-2z" fill="#2b579a"/>
<text x="286" y="752" font-size="9.500" font-weight="bold" fill="#fff" text-anchor="middle">W</text>

<circle cx="1039.500" cy="748" r="12" fill="url(#alice2)"/><path d="M1040 741q3 0 4.500 4t1.500 6q0 2-2.500 2h-7q-2.500 0-2.500-2t1.500-6 4.500-4z" fill="#fff"/>
<path d="M1073.500 752l5.500-5.500 5.500 5.500" fill="none" stroke="#111" stroke-width="1.300"/>
<rect x="1098.500" y="739" width="7" height="12" rx="3.500" fill="#111"/><path d="M1096.500 747v2a5.500 5.500 0 0 0 11 0v-2M1102 755v2M1098 757.500h8" fill="none" stroke="#111" stroke-width="1"/>
<circle cx="1127" cy="748" r="7.500" fill="#f3d826"/>
<path d="M1127 743.500v9M1122.500 748h9" stroke="#1c9a2e" stroke-width="2.400"/>
<path d="M1120.500 744a7.500 7.500 0 0 1 6-3.500M1133.500 752a7.500 7.500 0 0 1-6 3.500" fill="none" stroke="#1c9a2e" stroke-width="1.500"/>
<rect x="1149" y="743.500" width="12" height="8.500" fill="none" stroke="#111" stroke-width="1.100"/><rect x="1150.500" y="745" width="9" height="5.500" fill="#111"/><rect x="1161" y="746.500" width="1.500" height="3" fill="#111"/>
<path d="M1144 741v3M1147 741v3M1143 744h5v2q0 2-2.500 2t-2.500-2zM1145.500 748v3h3" fill="none" stroke="#111" stroke-width="1"/>
<path d="M1167.500 745.500h3l4-3.500v12l-4-3.500h-3z" fill="none" stroke="#111" stroke-width="1"/>
<path d="M1177 745.500q1.500 2.500 0 5M1179.500 743.500q3 4.500 0 9M1182 741.500q4.500 6.500 0 13" fill="none" stroke="#111" stroke-width="1"/>
<path d="M1194 754q1-9 12-12M1197 754.500q1-6 8-8M1200 755q.5-3 4.500-4.500" fill="none" stroke="#333" stroke-width="1"/><circle cx="1204.500" cy="754" r="1.300" fill="#222"/>
<text x="1229" y="753" font-size="12.500" fill="#222" text-anchor="middle">ҚАЗ</text>
<text x="1280" y="743" font-size="12" fill="#222" text-anchor="middle">20:27</text>
<text x="1280" y="761" font-size="12" fill="#222" text-anchor="middle" textLength="54" lengthAdjust="spacingAndGlyphs">10.04.2024</text>
<path d="M1325 740h16v12h-9l-3 3v-3h-4z" fill="#111"/><path d="M1328 743.500h10M1328 746h10M1328 748.500h7" stroke="#eee" stroke-width=".8"/>
<circle cx="1340" cy="755" r="7.500" fill="#d1dce8" stroke="#777" stroke-width="1.500"/><text x="1340" y="759.500" font-size="11" font-weight="bold" fill="#666" text-anchor="middle">1</text>
<rect x="1361" y="728" width="1" height="40" fill="#9aa7b0"/>
</svg>
</body>
</html>
